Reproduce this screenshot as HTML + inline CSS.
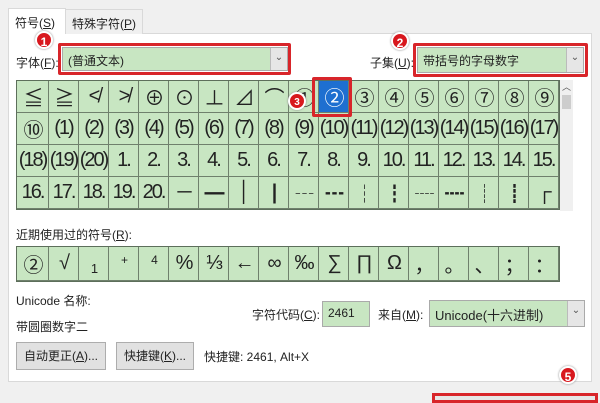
<!DOCTYPE html>
<html><head><meta charset="utf-8"><style>
*{margin:0;padding:0;box-sizing:border-box}
body{width:600px;height:400px;background:#f0f0f0;position:relative;overflow:hidden;font-family:"Liberation Sans","Noto Sans CJK SC",sans-serif;font-size:12px;color:#222}
.a{position:absolute}
.panel{left:8px;top:33px;width:584px;height:349px;background:#fff;border:1px solid #d9d9d9}
.tab{top:9px;height:25px;border:1px solid #d9d9d9;border-bottom:none;padding:5px 6px;font-size:12px}
.grid{left:16px;top:80px;display:grid;grid-template-columns:32px repeat(17,30px);grid-auto-rows:32px;border:1px solid #5d6f5b;background:#c8e6c2}
.grid div,.rec div{border-right:1px solid #6f806c;border-bottom:1px solid #6f806c;display:flex;align-items:center;justify-content:center;font-size:20px;color:#222;overflow:hidden;white-space:nowrap;letter-spacing:-2px}
.rec{left:16px;top:246px;display:grid;grid-template-columns:32px repeat(17,30px);grid-auto-rows:34px;border:1px solid #5d6f5b;background:#c8e6c2}
.combo{background:#c8e6c2;border:1px solid #aaa;font-size:12px;padding:4px 5px}
.dd{position:absolute;right:0;top:0;bottom:0;width:17px;background:#e6e6e6;border-left:1px solid #bbb;font-size:10px;color:#555;text-align:center;padding-top:4px}
.red{border:3px solid #d8252a;border-radius:2px}
.badge{width:18px;height:18px;border-radius:50%;background:#d8181e;color:#fff;font-weight:bold;font-size:12px;text-align:center;line-height:18px;border:2px solid #fff;box-shadow:0 0 2px #888}
.btn{background:#e1e1e1;border:1px solid #adadad;font-size:12px;text-align:center;line-height:26px;height:28px}
</style></head><body>
<div class="a panel"></div>
<div class="a tab" style="left:8px;width:58px;background:#fff;top:8px;height:26px">符号(<u>S</u>)</div>
<div class="a tab" style="left:65px;width:78px;background:#f0f0f0">特殊字符(<u>P</u>)</div>

<div class="a" style="left:16px;top:54px">字体(<u>F</u>):</div>
<div class="a combo" style="left:62px;top:47px;width:226px;height:24px">(普通文本)<div class="dd">⌄</div></div>
<div class="a red" style="left:58px;top:43px;width:233px;height:32px"></div>
<div class="a badge" style="left:35px;top:31px">1</div>

<div class="a" style="left:370px;top:54px">子集(<u>U</u>):</div>
<div class="a combo" style="left:417px;top:47px;width:167px;height:26px">带括号的字母数字<div class="dd">⌄</div></div>
<div class="a red" style="left:413px;top:43px;width:175px;height:34px"></div>
<div class="a badge" style="left:391px;top:32px">2</div>

<div class="a grid">
<div>≦</div><div>≧</div><div>≮</div><div>≯</div><div>⊕</div><div>⊙</div><div>⊥</div><div>⊿</div><div>⌒</div><div>①</div><div style="background:#1e6fd0;color:#fff">②</div><div>③</div><div>④</div><div>⑤</div><div>⑥</div><div>⑦</div><div>⑧</div><div>⑨</div>
<div>⑩</div><div>(1)</div><div>(2)</div><div>(3)</div><div>(4)</div><div>(5)</div><div>(6)</div><div>(7)</div><div>(8)</div><div>(9)</div><div>(10)</div><div>(11)</div><div>(12)</div><div>(13)</div><div>(14)</div><div>(15)</div><div>(16)</div><div>(17)</div>
<div>(18)</div><div>(19)</div><div>(20)</div><div>1.</div><div>2.</div><div>3.</div><div>4.</div><div>5.</div><div>6.</div><div>7.</div><div>8.</div><div>9.</div><div>10.</div><div>11.</div><div>12.</div><div>13.</div><div>14.</div><div>15.</div>
<div>16.</div><div>17.</div><div>18.</div><div>19.</div><div>20.</div><div>─</div><div>━</div><div>│</div><div>┃</div><div>┄</div><div>┅</div><div>┆</div><div>┇</div><div>┈</div><div>┉</div><div>┊</div><div>┋</div><div>┌</div>
</div>
<div class="a" style="left:560px;top:80px;width:13px;height:131px;background:#f0f0f0"><div style="font-size:9px;text-align:center;color:#555">︿</div><div style="margin:2px 2px;height:14px;background:#cdcdcd"></div></div>
<div class="a red" style="left:312px;top:77px;width:40px;height:40px"></div>
<div class="a badge" style="left:288px;top:92px;font-size:10px">3</div>

<div class="a" style="left:16px;top:226px">近期使用过的符号(<u>R</u>):</div>
<div class="a rec">
<div>②</div><div>√</div><div style="font-size:13px;padding-top:10px">1</div><div style="font-size:12px;padding-bottom:8px">+</div><div style="font-size:12px;padding-bottom:8px">4</div><div>%</div><div>⅓</div><div>←</div><div>∞</div><div>‰</div><div>∑</div><div>∏</div><div>Ω</div><div>，</div><div>。</div><div>、</div><div>；</div><div>：</div>
</div>

<div class="a" style="left:16px;top:292px">Unicode 名称:</div>
<div class="a" style="left:16px;top:318px">带圆圈数字二</div>
<div class="a" style="left:252px;top:306px">字符代码(<u>C</u>):</div>
<div class="a combo" style="left:322px;top:301px;width:48px;height:26px">2461</div>
<div class="a" style="left:378px;top:306px">来自(<u>M</u>):</div>
<div class="a combo" style="left:429px;top:300px;width:156px;height:27px;font-size:13px">Unicode(十六进制)<div class="dd">⌄</div></div>

<div class="a btn" style="left:16px;top:342px;width:90px">自动更正(<u>A</u>)...</div>
<div class="a btn" style="left:116px;top:342px;width:78px">快捷键(<u>K</u>)...</div>
<div class="a" style="left:204px;top:348px">快捷键: 2461, Alt+X</div>

<div class="a badge" style="left:559px;top:366px">5</div>
<div class="a" style="left:432px;top:393px;width:166px;height:10px;border:3px solid #d8252a;background:#e6e6e6"></div>
</body></html>
